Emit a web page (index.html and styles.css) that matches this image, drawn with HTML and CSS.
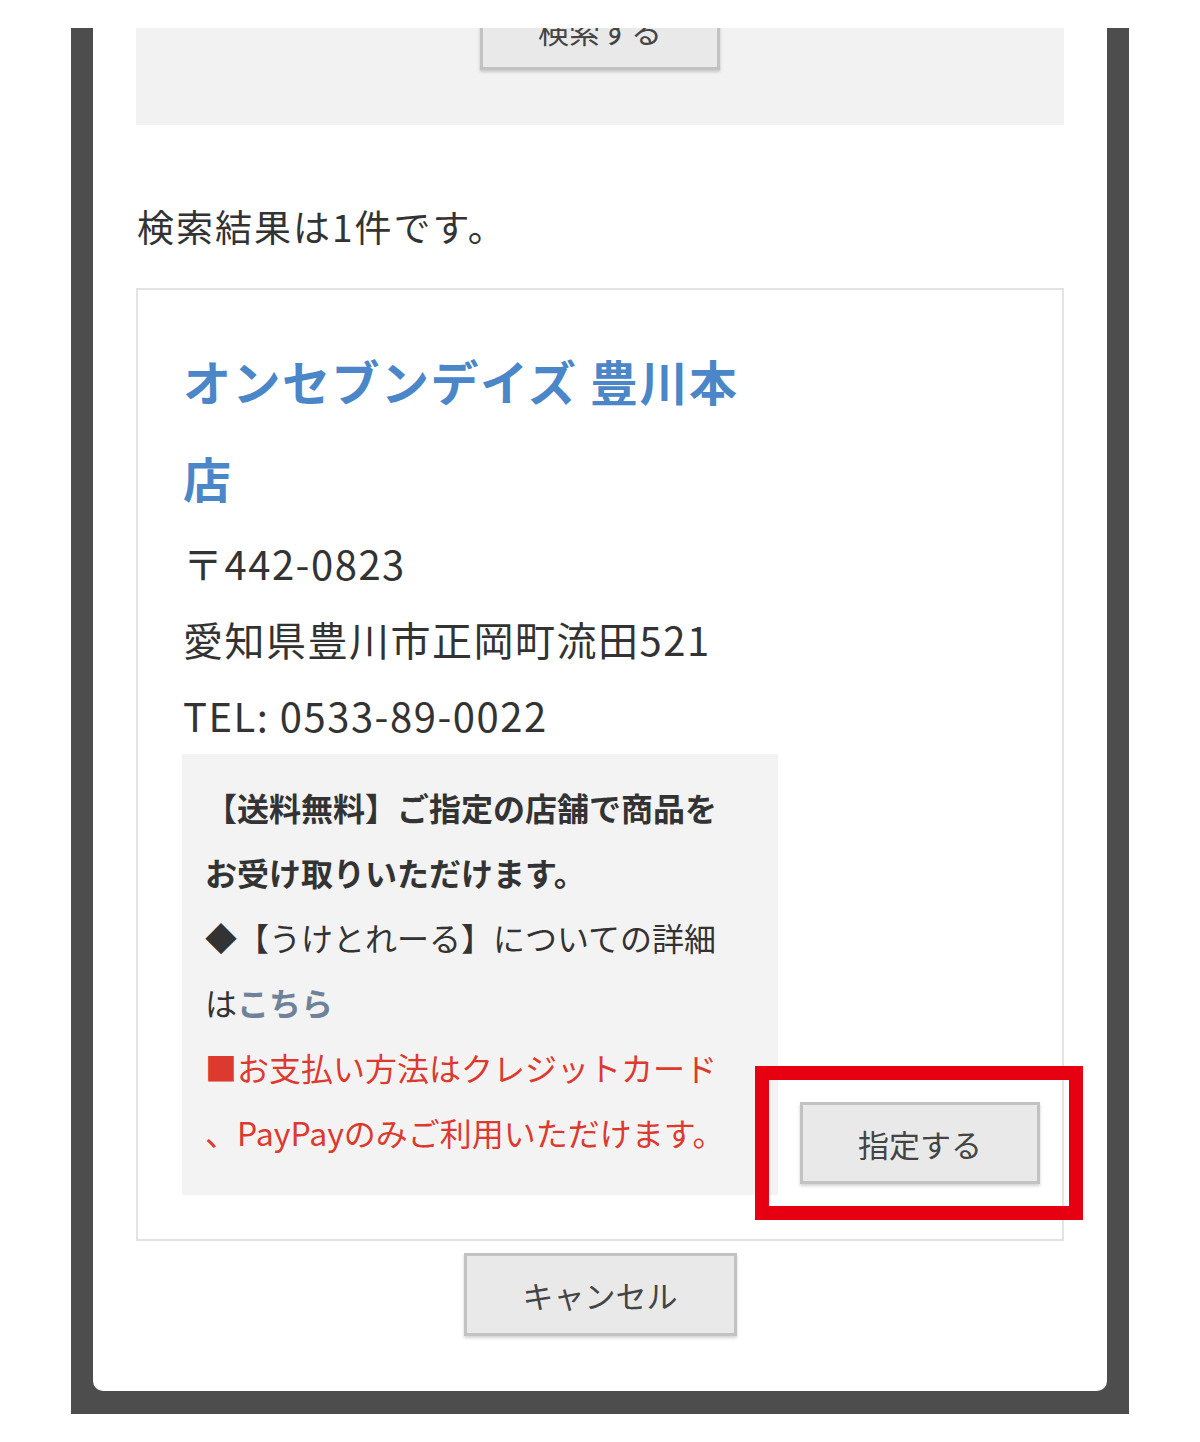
FILE: index.html
```html
<!DOCTYPE html>
<html lang="ja">
<head>
    <meta charset="UTF-8">
    <meta name="viewport" content="width=device-width, initial-scale=1.0">
    <title>店舗検索</title>
    <link rel="stylesheet" href="styles.css">
</head>
<body>
    <div class="overlay">
        <div class="modal">
            <!-- Search form (scrolled out of view) -->
            <div class="search-area">
                <button class="button search-button">検索する</button>
            </div>

            <p class="result-count">検索結果は1件です。</p>

            <div class="store-card">
                <div class="store-info">
                    <h2 class="store-name">オンセブンデイズ 豊川本店</h2>
                    <p class="store-line">〒442-0823</p>
                    <p class="store-line">愛知県豊川市正岡町流田521</p>
                    <p class="store-line">TEL: 0533-89-0022</p>

                    <div class="store-note">
                        <p class="note-strong">【送料無料】ご指定の店舗で商品をお受け取りいただけます。</p>
                        <p>◆【うけとれーる】についての詳細は<a href="#" class="note-link">こちら</a></p>
                        <p class="note-red">■お支払い方法はクレジットカード、PayPayのみご利用いただけます。</p>
                    </div>
                </div>

                <div class="select-wrap">
                    <button class="button select-button">指定する</button>
                    <span class="highlight"></span>
                </div>
            </div>

            <div class="cancel-row">
                <button class="button cancel-button">キャンセル</button>
            </div>
        </div>
    </div>
</body>
</html>
```

FILE: styles.css
```css
* {
    margin: 0;
    padding: 0;
    box-sizing: border-box;
    font-family: 'Noto Sans CJK JP', 'Noto Sans', sans-serif;
}

body {
    background: #ffffff;
    color: #333333;
}

/* Dark backdrop behind the modal */
.overlay {
    margin: 28px 71px 0;
    background: #4d4d4d;
    padding: 0 22px 23px;
}

.modal {
    background: #ffffff;
    border-radius: 0 0 10px 10px;
    padding: 0 43px 55px;
}

/* Search area */
.search-area {
    background: #f3f2f2;
    height: 97px;
    overflow: hidden;
    display: flex;
    justify-content: center;
}

.button {
    background: #e9e9e9;
    border: 3px solid #c2c2c2;
    box-shadow: 0 2px 3px rgba(0,0,0,0.18);
    color: #444444;
    font-size: 31px;
    cursor: pointer;
}

.search-button {
    width: 240px;
    height: 82px;
    margin-top: -40px;
}

.result-count {
    font-size: 37px;
    letter-spacing: 2px;
    line-height: 54px;
    margin: 74px 0 35px 1px;
}

/* Result card */
.store-card {
    position: relative;
    border: 2px solid #e3e3e3;
    padding: 42px 21px 44px 44px;
    display: flex;
    align-items: flex-end;
    gap: 22px;
}

.store-info {
    width: 596px;
}

.store-name {
    color: #4a86c8;
    font-size: 48px;
    font-weight: bold;
    letter-spacing: 1.5px;
    line-height: 97px;
    padding-left: 1px;
}

.store-line {
    font-size: 40px;
    letter-spacing: 1.5px;
    line-height: 76px;
    padding-left: 1px;
}

.store-line:first-of-type {
    margin-top: -1px;
}

.store-note {
    background: #f4f3f3;
    margin-top: 1px;
    padding: 21px 43px 30px 23px;
    font-size: 32px;
    line-height: 65px;
}

.note-strong {
    font-weight: bold;
}

.note-link {
    color: #6e8399;
    font-weight: bold;
    text-decoration: none;
}

.note-red {
    color: #dd3a2f;
    line-break: anywhere;
}

.select-wrap {
    position: relative;
    margin-bottom: 11px;
}

.select-button {
    display: block;
    width: 240px;
    height: 82px;
}

/* Red annotation frame */
.highlight {
    position: absolute;
    top: -36px;
    bottom: -36px;
    left: -45px;
    right: -43px;
    border: 14px solid #e60012;
}

.cancel-row {
    display: flex;
    justify-content: center;
    margin-top: 12px;
}

.cancel-button {
    width: 273px;
    height: 83px;
}
```
